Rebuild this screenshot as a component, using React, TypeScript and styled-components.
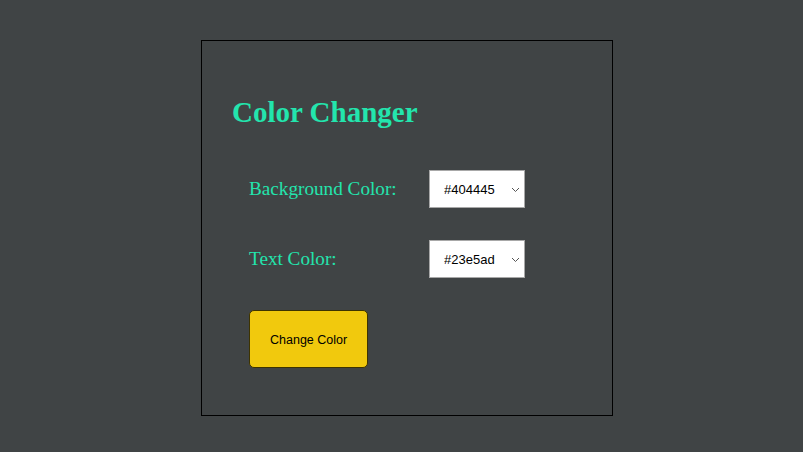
import React, { useState } from "react";
import styled, { createGlobalStyle } from "styled-components";

const GlobalStyle = createGlobalStyle`
  html, body {
    margin: 0;
    padding: 0;
    background: #404445;
  }
  body {
    font-family: "Liberation Serif", "Times New Roman", serif;
  }
`;

const Page = styled.div`
  padding: 40px 0 0 201px;
`;

const Card = styled.div<{ $bg: string; $fg: string }>`
  box-sizing: border-box;
  width: 412px;
  border: 1px solid #000;
  background: ${(p) => p.$bg};
  color: ${(p) => p.$fg};
  padding: 55px 30px 47px 30px;
  display: flex;
  flex-direction: column;
`;

const Title = styled.h1`
  margin: 0;
  font-size: 29px;
  line-height: 32px;
  font-weight: bold;
`;

const Form = styled.div`
  margin-top: 42px;
  padding-left: 17px;
  display: flex;
  flex-direction: column;
  gap: 32px;
  align-items: flex-start;
`;

const Row = styled.div`
  display: flex;
  align-items: center;
  height: 38px;
`;

const Label = styled.label`
  width: 180px;
  font-size: 19.2px;
  line-height: 22px;
`;

const SelectWrap = styled.div`
  position: relative;
  width: 96px;
  height: 38px;
`;

const Select = styled.select`
  appearance: none;
  -webkit-appearance: none;
  box-sizing: border-box;
  width: 96px;
  height: 38px;
  margin: 0;
  padding: 1px 0 0 14px;
  border: 1px solid #a8a8a8;
  border-radius: 0;
  background: #fff;
  color: #000;
  font-family: "Liberation Sans", Arial, sans-serif;
  font-size: 13px;
  outline: none;
`;

const Chevron = styled.svg`
  position: absolute;
  right: 5px;
  top: 17px;
  width: 9px;
  height: 6px;
  pointer-events: none;
`;

const Button = styled.button`
  box-sizing: border-box;
  height: 58px;
  padding: 2px 20px 0;
  border: 1px solid #3d3300;
  border-radius: 5px;
  background: #f1c90d;
  color: #000;
  font-family: "Liberation Sans", Arial, sans-serif;
  font-size: 12.5px;
  cursor: pointer;
`;

const bgOptions = ["#404445", "#2c3e50", "#ffffff"];
const fgOptions = ["#23e5ad", "#ffffff", "#000000"];

function ColorSelect({ value, options, onChange }: { value: string; options: string[]; onChange: (v: string) => void }) {
  return (
    <SelectWrap>
      <Select value={value} onChange={(e) => onChange(e.target.value)}>
        {options.map((o) => (
          <option key={o} value={o}>
            {o}
          </option>
        ))}
      </Select>
      <Chevron viewBox="0 0 9 6">
        <path d="M1 1 L4.5 4.5 L8 1" fill="none" stroke="#555" strokeWidth="1" />
      </Chevron>
    </SelectWrap>
  );
}

export default function App() {
  const [bg, setBg] = useState("#404445");
  const [fg, setFg] = useState("#23e5ad");
  const [applied, setApplied] = useState({ bg: "#404445", fg: "#23e5ad" });

  return (
    <>
      <GlobalStyle />
      <Page>
        <Card $bg={applied.bg} $fg={applied.fg}>
          <Title>Color Changer</Title>
          <Form>
            <Row>
              <Label>Background Color:</Label>
              <ColorSelect value={bg} options={bgOptions} onChange={setBg} />
            </Row>
            <Row>
              <Label>Text Color:</Label>
              <ColorSelect value={fg} options={fgOptions} onChange={setFg} />
            </Row>
            <Button onClick={() => setApplied({ bg, fg })}>Change Color</Button>
          </Form>
        </Card>
      </Page>
    </>
  );
}
